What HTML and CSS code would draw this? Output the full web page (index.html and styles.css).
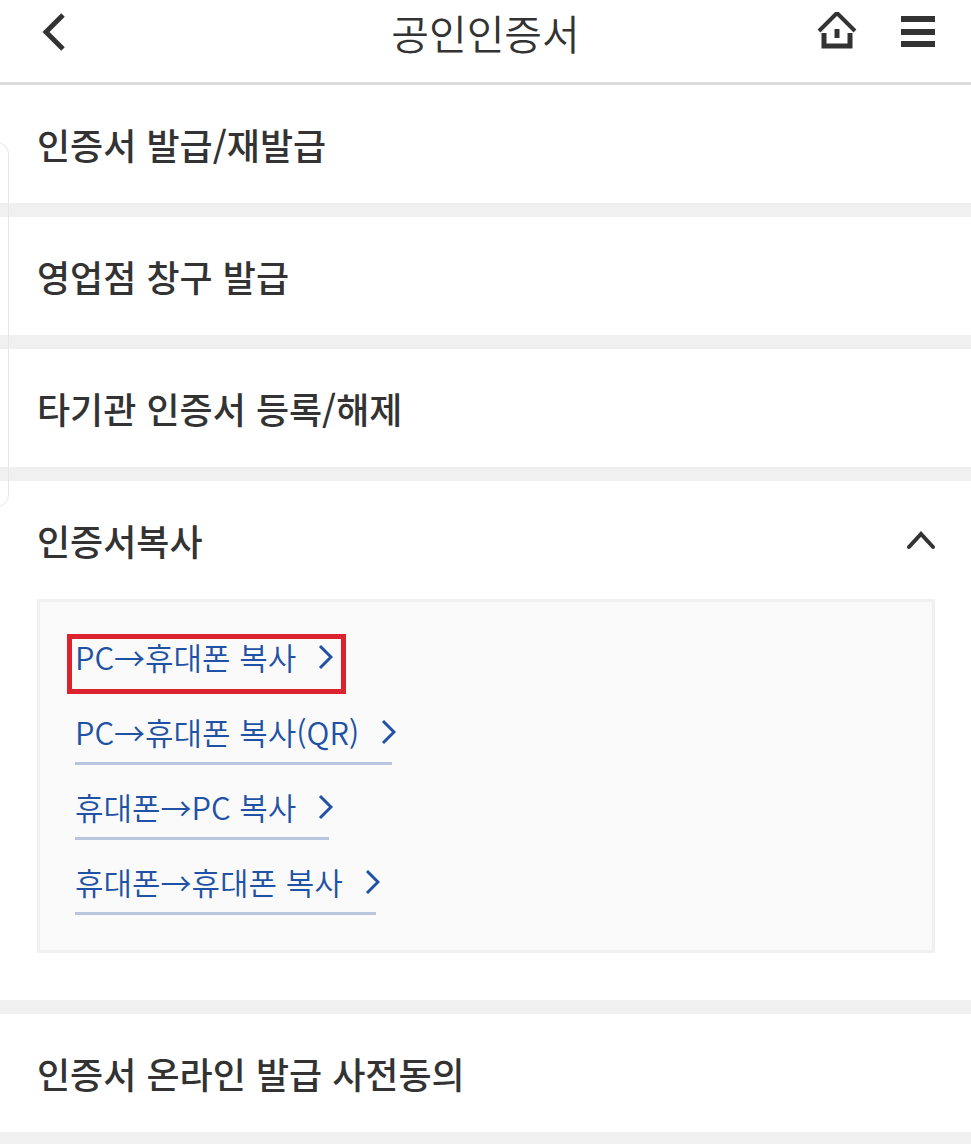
FILE: index.html
```html
<!DOCTYPE html>
<html lang="ko">
<head>
  <meta charset="UTF-8">
  <meta name="viewport" content="width=device-width, initial-scale=1">
  <title>공인인증서</title>
  <link rel="stylesheet" href="styles.css">
</head>
<body>
  <header class="header">
    <button type="button" class="icon-btn" aria-label="이전">
      <svg width="40" height="40" viewBox="0 0 40 40"><path d="M27 3L10 20L27 37" stroke-width="5"/></svg>
    </button>
    <h1>공인인증서</h1>
    <nav class="header-menu">
      <a href="#" class="icon-btn" aria-label="홈">
        <svg width="40" height="40" viewBox="0 0 40 40">
          <path d="M2 19L20 1L38 19" stroke-width="4"/>
          <path d="M7 21V34H33V21" stroke-width="5"/>
          <path d="M20 17V26" stroke-width="5"/>
        </svg>
      </a>
      <button type="button" class="icon-btn" aria-label="전체메뉴">
        <svg width="34" height="40" viewBox="0 0 34 40"><path d="M0 7H34M0 20H34M0 32H34" stroke-width="6"/></svg>
      </button>
    </nav>
  </header>

  <main>
    <section class="item"><h2><a href="#">인증서 발급/재발급</a></h2></section>
    <section class="item"><h2><a href="#">영업점 창구 발급</a></h2></section>
    <section class="item"><h2><a href="#">타기관 인증서 등록/해제</a></h2></section>

    <section class="item open">
      <h2>
        <button type="button" class="toggle" aria-expanded="true" aria-controls="copyMenu">
          인증서복사
          <svg width="28" height="20" viewBox="0 0 28 20"><path d="M2 17L14 4L26 17" stroke-width="4" stroke-linecap="round"/></svg>
        </button>
      </h2>
      <ul class="panel" id="copyMenu">
        <li class="marked"><a href="#">PC→휴대폰 복사<svg width="16" height="26" viewBox="0 0 16 26"><path d="M3 2L14 13L3 24" stroke-width="3"/></svg></a></li>
        <li><a href="#">PC→휴대폰 복사(QR)<svg width="16" height="26" viewBox="0 0 16 26"><path d="M3 2L14 13L3 24" stroke-width="3"/></svg></a></li>
        <li><a href="#">휴대폰→PC 복사<svg width="16" height="26" viewBox="0 0 16 26"><path d="M3 2L14 13L3 24" stroke-width="3"/></svg></a></li>
        <li><a href="#">휴대폰→휴대폰 복사<svg width="16" height="26" viewBox="0 0 16 26"><path d="M3 2L14 13L3 24" stroke-width="3"/></svg></a></li>
      </ul>
    </section>

    <section class="item"><h2><a href="#">인증서 온라인 발급 사전동의</a></h2></section>
  </main>

  <div class="edge-handle"></div>
</body>
</html>
```
FILE: styles.css
```css
* {
  box-sizing: border-box;
}

body {
  margin: 0;
  background-color: #fff;
  color: #333;
  font-family: "Noto Sans CJK KR", sans-serif;
}

h1, h2, ul {
  margin: 0;
  padding: 0;
}

a, button {
  color: inherit;
  font: inherit;
  text-decoration: none;
}

button {
  padding: 0;
  border: none;
  background: none;
  cursor: pointer;
}

svg {
  display: block;
  fill: none;
  stroke: currentColor;
}

.header {
  display: grid;
  grid-template-columns: 1fr auto 1fr;
  align-items: center;
  height: 85px;
  padding: 0 36px 18px;
  border-bottom: 3px solid #dcdcdc;
}

.header h1 {
  font-size: 41px;
  font-weight: 350;
  line-height: 60px;
}

.header .icon-btn {
  justify-self: start;
}

.header-menu {
  display: flex;
  justify-content: flex-end;
  gap: 44px;
}

.item {
  border-bottom: 14px solid #f0f0f0;
}

.item h2 {
  padding: 0 36px 0 37px;
  font-size: 36px;
  font-weight: 500;
  line-height: 118px;
}

.item h2 a {
  display: block;
}

.toggle {
  display: flex;
  justify-content: space-between;
  align-items: center;
  width: 100%;
}

.open {
  padding-bottom: 47px;
}

.panel {
  margin: 0 36px 0 37px;
  padding: 25px 35px 35px;
  border: 3px solid #f0f0f0;
  background-color: #fafafa;
  list-style: none;
}

.panel li {
  position: relative;
  width: fit-content;
  height: 63px;
  margin-bottom: 12px;
  border-bottom: 3px solid #b8c5dc;
}

.panel li:last-child {
  margin-bottom: 0;
}

.panel a {
  display: flex;
  align-items: center;
  gap: 21px;
  margin-right: -4px;
  color: #1f52a5;
  font-size: 31px;
  font-weight: 350;
  line-height: 60px;
}

.panel .marked {
  border-bottom-color: transparent;
}

.marked::after {
  content: "";
  position: absolute;
  top: 7px;
  right: -17px;
  bottom: -7px;
  left: -8px;
  border: 5px solid #dc222c;
  pointer-events: none;
}

.edge-handle {
  position: absolute;
  top: 142px;
  left: -20px;
  width: 29px;
  height: 365px;
  border: 1px solid #e6e6e6;
  border-radius: 12px;
  pointer-events: none;
}
```
